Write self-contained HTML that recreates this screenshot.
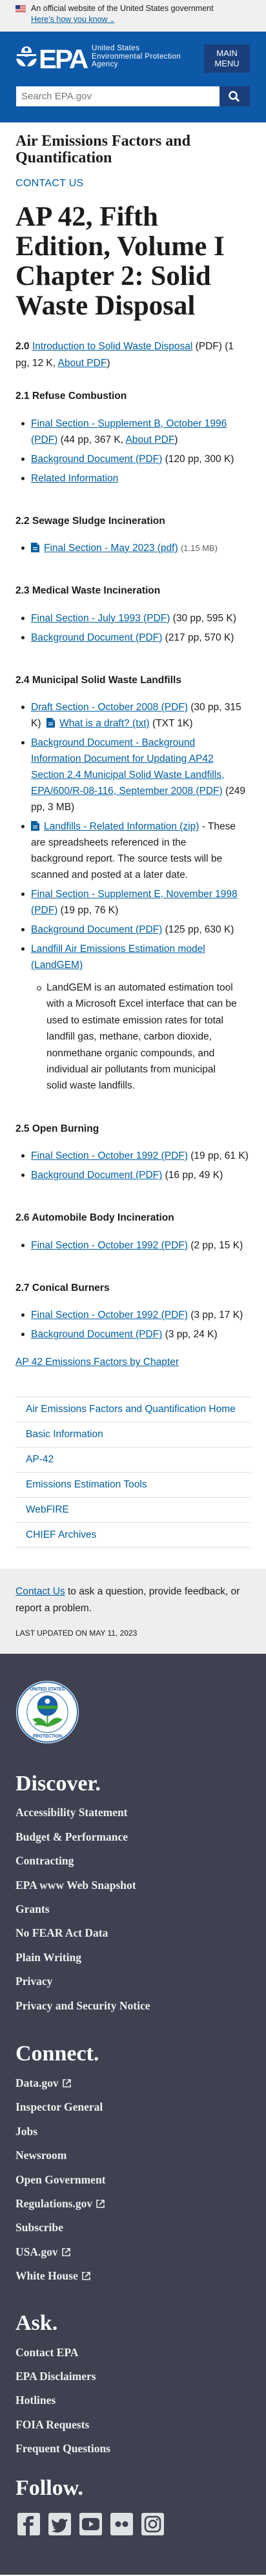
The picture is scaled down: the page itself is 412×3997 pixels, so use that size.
<!DOCTYPE html>
<html><head><meta charset="utf-8">
<style>
*{box-sizing:border-box;margin:0;padding:0}
body{width:412px;height:3997px;overflow:hidden;background:#fff;font-family:"Liberation Sans",sans-serif;color:#1b1b1b;position:relative}
a{color:#005ea2;text-decoration:underline}
.banner{height:49px;background:#f0f0f0;position:relative;font-size:12.5px}
.banner .t1{position:absolute;left:48px;top:6px;color:#1b1b1b}
.banner .t2{position:absolute;left:48px;top:23px;color:#005ea2;text-decoration:underline}
.hdr{height:141px;background:#0e59a7;position:relative}
.menu{position:absolute;left:316px;top:20px;width:71px;height:44px;background:#1a3f7a;color:#fff;font-size:13px;text-align:center;line-height:16px;padding-top:6px}
.search{position:absolute;left:25px;top:85px;width:315px;height:31px;background:#fff;color:#71767a;font-size:15px;padding:7px 8px}
.sbtn{position:absolute;left:340px;top:85px;width:47px;height:31px;background:#1a3f7a}
.main{padding:0 24px}
.site{font-family:"Liberation Serif",serif;font-weight:bold;font-size:24px;line-height:26px;margin-top:16px}
.cu{margin-top:17px;font-size:16px;line-height:20px;color:#005ea2;letter-spacing:0.3px}
h1{font-family:"Liberation Serif",serif;font-weight:bold;font-size:43px;line-height:46px;margin-top:19px;white-space:nowrap}
.p20{margin-top:27px;font-size:15.5px;line-height:26px;white-space:nowrap}
h2{font-size:15.5px;font-weight:bold;line-height:24px;margin-top:42px;white-space:nowrap}
h2.first{margin-top:26px}
ul{list-style:none;margin-top:17.5px;padding-left:24px;font-size:15.5px;line-height:25px;white-space:nowrap}
li{position:relative;margin-top:5px}
li:first-child{margin-top:0}
ul.top>li:before{content:"";position:absolute;left:-15px;top:10px;width:5px;height:5px;border-radius:50%;background:#1b1b1b}
ul.sub{margin-top:10px;padding-left:24px;line-height:25.4px;margin-bottom:13px}
ul.sub li:before{content:"";position:absolute;left:-15px;top:10px;width:5px;height:5px;border-radius:50%;border:1px solid #1b1b1b}
.fi{display:inline-block;width:13px;height:15px;vertical-align:-2px;margin-right:7px}
.gray{color:#5c5c5c;font-size:13px}
.ap42{margin-top:18px;font-size:15.5px;line-height:25px}
.nav{margin-top:41px;border-top:1px solid #dfe1e2}
.nav div{height:39px;border-bottom:1px solid #dfe1e2;padding-left:16px;line-height:38px;color:#005ea2;font-size:15.5px;white-space:nowrap}
.fb{margin-top:32px;background:#eee;padding:23px 24px 24px;height:132px}
.fb p{font-size:15.5px;line-height:26px;white-space:nowrap}
.fb .lu{font-size:12px;line-height:16px;margin-top:17px}
.foot{background:#3d4150;height:1429px;padding:41px 24px 0;color:#f0f0f0;font-family:"Liberation Serif",serif;font-weight:bold}
.foot .h{font-size:34px;line-height:40px;color:#fff}
.foot .l{font-size:17.5px;line-height:37.4px;white-space:nowrap}
.ext{display:inline-block;width:13px;height:13px;vertical-align:-1px;margin-left:6px}
.icons{margin-top:18px;display:flex;gap:13px;padding-left:3px}
.icons div{width:35px;height:35px;background:#dfe1e2;border-radius:3px;position:relative}
</style></head><body>
<div class="banner">
<svg style="position:absolute;left:24px;top:8px" width="16" height="11"><rect width="16" height="11" fill="#fff"/><g fill="#c9302c"><rect y="0" width="16" height="1.2"/><rect y="2.4" width="16" height="1.2"/><rect y="4.8" width="16" height="1.2"/><rect y="7.2" width="16" height="1.2"/><rect y="9.6" width="16" height="1.4"/></g><rect width="7" height="6" fill="#2e3b8c"/></svg>
<div class="t1">An official website of the United States government</div>
<div class="t2">Here’s how you know <span style="text-decoration:none;font-size:9px">&#8964;</span></div>
</div>
<div class="hdr">
<svg style="position:absolute;left:24px;top:22px" width="118" height="38" viewBox="0 0 118 38">
<g fill="#fff"><circle cx="17" cy="9" r="8"/><rect x="1" y="11" width="32" height="4" fill="#0e59a7"/><rect x="2" y="13" width="30" height="3"/><path d="M1 20 Q9 19 16 32 Q4 33 1 20Z"/><path d="M33 20 Q25 19 18 32 Q30 33 33 20Z"/><circle cx="17" cy="6" r="3" fill="#0e59a7"/></g>
<text x="36" y="35" fill="#fff" font-family="Liberation Sans" font-weight="bold" font-size="42" letter-spacing="-3">EPA</text>
</svg>
<div style="position:absolute;left:142px;top:20px;color:#fff;font-size:11.5px;line-height:12.5px;letter-spacing:0.4px">United States<br>Environmental Protection<br>Agency</div>
<div class="menu">MAIN<br>MENU</div>
<div class="search">Search EPA.gov</div>
<div class="sbtn"><svg width="47" height="31"><circle cx="21" cy="14" r="5.5" stroke="#fff" stroke-width="2.5" fill="none"/><line x1="25" y1="18" x2="30" y2="23" stroke="#fff" stroke-width="3"/></svg></div>
</div>
<div class="main">
<div class="site">Air Emissions Factors and<br>Quantification</div>
<div class="cu">CONTACT US</div>
<h1>AP 42, Fifth<br>Edition, Volume I<br>Chapter 2: Solid<br>Waste Disposal</h1>
<div class="p20"><b>2.0</b> <a>Introduction to Solid Waste Disposal</a> (PDF) (1<br>pg, 12 K, <a>About PDF</a>)</div>

<h2 class="first">2.1 Refuse Combustion</h2>
<ul class="top">
<li><a>Final Section - Supplement B, October 1996</a><br><a>(PDF)</a> (44 pp, 367 K, <a>About PDF</a>)</li>
<li><a>Background Document (PDF)</a> (120 pp, 300 K)</li>
<li><a>Related Information</a></li>
</ul>
<h2>2.2 Sewage Sludge Incineration</h2>
<ul class="top"><li><svg class="fi" viewBox="0 0 13 15"><path d="M0 0H9L13 4V15H0Z" fill="#005ea2"/><path d="M9 0V4H13" fill="#6b9fd1"/><rect x="3" y="7" width="7" height="1.3" fill="#fff"/><rect x="3" y="10" width="7" height="1.3" fill="#fff"/></svg><a>Final Section - May 2023 (pdf)</a> <span class="gray">(1.15 MB)</span></li></ul>
<h2>2.3 Medical Waste Incineration</h2>
<ul class="top">
<li><a>Final Section - July 1993 (PDF)</a> (30 pp, 595 K)</li>
<li><a>Background Document (PDF)</a> (217 pp, 570 K)</li>
</ul>
<h2>2.4 Municipal Solid Waste Landfills</h2>
<ul class="top">
<li><a>Draft Section - October 2008 (PDF)</a> (30 pp, 315<br>K) &nbsp;<svg class="fi" viewBox="0 0 13 15"><path d="M0 0H9L13 4V15H0Z" fill="#005ea2"/><path d="M9 0V4H13" fill="#6b9fd1"/><rect x="3" y="7" width="7" height="1.3" fill="#fff"/><rect x="3" y="10" width="7" height="1.3" fill="#fff"/></svg><a>What is a draft? (txt)</a> (TXT 1K)</li>
<li><a>Background Document - Background</a><br><a>Information Document for Updating AP42</a><br><a>Section 2.4 Municipal Solid Waste Landfills,</a><br><a>EPA/600/R-08-116, September 2008 (PDF)</a> (249<br>pp, 3 MB)</li>
<li><svg class="fi" viewBox="0 0 13 15"><path d="M0 0H9L13 4V15H0Z" fill="#005ea2"/><path d="M9 0V4H13" fill="#6b9fd1"/><rect x="3" y="7" width="7" height="1.3" fill="#fff"/><rect x="3" y="10" width="7" height="1.3" fill="#fff"/></svg><a>Landfills - Related Information (zip)</a> - These<br>are spreadsheets referenced in the<br>background report. The source tests will be<br>scanned and posted at a later date.</li>
<li><a>Final Section - Supplement E, November 1998</a><br><a>(PDF)</a> (19 pp, 76 K)</li>
<li><a>Background Document (PDF)</a> (125 pp, 630 K)</li>
<li><a>Landfill Air Emissions Estimation model</a><br><a>(LandGEM)</a>
<ul class="sub"><li>LandGEM is an automated estimation tool<br>with a Microsoft Excel interface that can be<br>used to estimate emission rates for total<br>landfill gas, methane, carbon dioxide,<br>nonmethane organic compounds, and<br>individual air pollutants from municipal<br>solid waste landfills.</li></ul></li>
</ul>
<h2 style="margin-top:42px">2.5 Open Burning</h2>
<ul class="top">
<li><a>Final Section - October 1992 (PDF)</a> (19 pp, 61 K)</li>
<li><a>Background Document (PDF)</a> (16 pp, 49 K)</li>
</ul>
<h2>2.6 Automobile Body Incineration</h2>
<ul class="top"><li><a>Final Section - October 1992 (PDF)</a> (2 pp, 15 K)</li></ul>
<h2>2.7 Conical Burners</h2>
<ul class="top">
<li><a>Final Section - October 1992 (PDF)</a> (3 pp, 17 K)</li>
<li><a>Background Document (PDF)</a> (3 pp, 24 K)</li>
</ul>
<div class="ap42"><a>AP 42 Emissions Factors by Chapter</a></div>
<div class="nav">
<div>Air Emissions Factors and Quantification Home</div>
<div>Basic Information</div>
<div>AP-42</div>
<div>Emissions Estimation Tools</div>
<div>WebFIRE</div>
<div>CHIEF Archives</div>
</div>
</div>
<div class="fb">
<p><a>Contact Us</a> to ask a question, provide feedback, or<br>report a problem.</p>
<div class="lu">LAST UPDATED ON MAY 11, 2023</div>
</div>
<div class="foot">
<svg width="99" height="99" viewBox="0 0 100 100"><circle cx="50" cy="50" r="49" fill="#fff"/><circle cx="50" cy="50" r="47" fill="none" stroke="#2b6cb0" stroke-width="2"/><circle cx="50" cy="50" r="32" fill="none" stroke="#2b6cb0" stroke-width="1"/><text x="50" y="16" text-anchor="middle" font-size="7" fill="#1a5fa8" font-family="Liberation Sans" font-weight="bold">UNITED STATES</text><text x="50" y="90" text-anchor="middle" font-size="7" fill="#1a5fa8" font-family="Liberation Sans" font-weight="bold">PROTECTION</text><circle cx="50" cy="40" r="16" fill="#1a5fa8"/><rect x="34" y="40" width="32" height="5" fill="#3aa335"/><circle cx="50" cy="33" r="4" fill="#fff"/><path d="M50 72 Q40 55 28 62 Q38 70 50 72Z M50 72 Q60 55 72 62 Q62 70 50 72Z M50 72 Q38 64 30 70 M50 72 V55" fill="#3aa335" stroke="#3aa335" stroke-width="2"/></svg>
<div class="h" style="margin-top:37px">Discover.</div>
<div style="margin-top:6px">
<div class="l">Accessibility Statement</div><div class="l">Budget &amp; Performance</div><div class="l">Contracting</div><div class="l">EPA www Web Snapshot</div><div class="l">Grants</div><div class="l">No FEAR Act Data</div><div class="l">Plain Writing</div><div class="l">Privacy</div><div class="l">Privacy and Security Notice</div>
</div>
<div class="h" style="margin-top:36px">Connect.</div>
<div style="margin-top:7px">
<div class="l">Data.gov<svg class="ext" viewBox="0 0 13 13"><path d="M5 1H1V12H12V8" fill="none" stroke="#f0f0f0" stroke-width="1.6"/><path d="M7 1H12V6M12 1L5 8" fill="none" stroke="#f0f0f0" stroke-width="1.6"/></svg></div><div class="l">Inspector General</div><div class="l">Jobs</div><div class="l">Newsroom</div><div class="l">Open Government</div><div class="l">Regulations.gov<svg class="ext" viewBox="0 0 13 13"><path d="M5 1H1V12H12V8" fill="none" stroke="#f0f0f0" stroke-width="1.6"/><path d="M7 1H12V6M12 1L5 8" fill="none" stroke="#f0f0f0" stroke-width="1.6"/></svg></div><div class="l">Subscribe</div><div class="l">USA.gov<svg class="ext" viewBox="0 0 13 13"><path d="M5 1H1V12H12V8" fill="none" stroke="#f0f0f0" stroke-width="1.6"/><path d="M7 1H12V6M12 1L5 8" fill="none" stroke="#f0f0f0" stroke-width="1.6"/></svg></div><div class="l">White House<svg class="ext" viewBox="0 0 13 13"><path d="M5 1H1V12H12V8" fill="none" stroke="#f0f0f0" stroke-width="1.6"/><path d="M7 1H12V6M12 1L5 8" fill="none" stroke="#f0f0f0" stroke-width="1.6"/></svg></div>
</div>
<div class="h" style="margin-top:34px">Ask.</div>
<div style="margin-top:7px">
<div class="l">Contact EPA</div><div class="l">EPA Disclaimers</div><div class="l">Hotlines</div><div class="l">FOIA Requests</div><div class="l">Frequent Questions</div>
</div>
<div class="h" style="margin-top:22px">Follow.</div>
<div class="icons">
<div><svg width="35" height="35"><path d="M19 35V20H24L25 15H19V12Q19 10 21 10H25V5H20Q13 5 13 12V15H9V20H13V35Z" fill="#3d4150"/></svg></div>
<div><svg width="35" height="35"><path d="M28 10Q26 11 25 11Q23 9 21 9Q16 9 16 15Q10 15 6 10Q4 15 8 18Q6 18 6 17Q6 21 10 22Q8 23 7 22Q9 26 12 26Q9 28 5 28Q16 34 24 26Q28 21 27 14Q29 13 30 11Z" fill="#3d4150"/></svg></div>
<div><svg width="35" height="35"><rect x="4" y="8" width="27" height="19" rx="5" fill="#3d4150"/><path d="M15 13L22 17.5L15 22Z" fill="#dfe1e2"/></svg></div>
<div><svg width="35" height="35"><circle cx="12" cy="17.5" r="4.5" fill="#3d4150"/><circle cx="23" cy="17.5" r="4.5" fill="#3d4150"/></svg></div>
<div><svg width="35" height="35"><rect x="6" y="6" width="23" height="23" rx="6" fill="none" stroke="#3d4150" stroke-width="2.5"/><circle cx="17.5" cy="17.5" r="5.5" fill="none" stroke="#3d4150" stroke-width="2.5"/><circle cx="24.5" cy="10.5" r="1.5" fill="#3d4150"/></svg></div>
</div>
</div>
</body></html>
